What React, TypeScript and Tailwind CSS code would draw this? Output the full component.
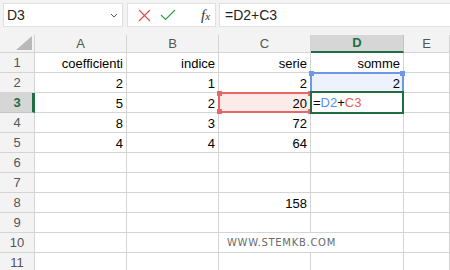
import React from 'react';

type Cell = { v?: string; kind?: 'D2' | 'C3' | 'D3' | 'mark' };

const cols = ['A', 'B', 'C', 'D', 'E'];

const data: Record<number, Cell[]> = {
  1: [{ v: 'coefficienti' }, { v: 'indice' }, { v: 'serie' }, { v: 'somme' }, {}],
  2: [{ v: '2' }, { v: '1' }, { v: '2' }, { v: '2', kind: 'D2' }, {}],
  3: [{ v: '5' }, { v: '2' }, { v: '20', kind: 'C3' }, { kind: 'D3' }, {}],
  4: [{ v: '8' }, { v: '3' }, { v: '72' }, {}, {}],
  5: [{ v: '4' }, { v: '4' }, { v: '64' }, {}, {}],
  8: [{}, {}, { v: '158' }, {}, {}],
  10: [{}, {}, { kind: 'mark' }, {}, {}],
};

const Handle = ({ className }: { className: string }) => (
  <span className={`absolute w-[5px] h-[5px] ${className}`} />
);

const GridCell: React.FC<{ cell: Cell }> = ({ cell }) => {
  if (cell.kind === 'mark') {
    return (
      <div className="relative h-[20px] border-b border-[#d4d4d4]">
        <span className="absolute left-[8px] bottom-[4px] whitespace-nowrap text-[10px] leading-none tracking-[0.7px] text-[#6b6b6b] font-['DejaVu_Sans',sans-serif]">
          WWW.STEMKB.COM
        </span>
      </div>
    );
  }
  if (cell.kind === 'D3') {
    return (
      <div className="relative h-[20px] border-r border-b border-[#d4d4d4]">
        <div className="absolute -left-px -top-[2px] w-[94px] h-[23px] border-2 border-[#1e6e42] bg-white z-20 flex items-center pl-[1px] text-[13px]">
          <span className="text-black">=</span>
          <span className="text-[#5b8ce8]">D2</span>
          <span className="text-black">+</span>
          <span className="text-[#e65c5c]">C3</span>
        </div>
      </div>
    );
  }
  return (
    <div className="relative h-[20px] border-r border-b border-[#d4d4d4] flex items-end justify-end pr-[3px]">
      {cell.kind === 'D2' && (
        <div className="absolute -left-px -top-px w-[94px] h-[21px] border-2 border-[#6f97e8] bg-[#eef2fc] z-10">
          <Handle className="-left-[3px] -top-[3px] bg-[#6f97e8]" />
          <Handle className="-right-[3px] -top-[3px] bg-[#6f97e8]" />
        </div>
      )}
      {cell.kind === 'C3' && (
        <div className="absolute -left-px -top-px w-[93px] h-[21px] border-2 border-r-0 border-[#e86666] bg-[#fdebea] z-10">
          <Handle className="-left-[3px] -top-[3px] bg-[#e86666]" />
          <Handle className="-left-[3px] -bottom-[3px] bg-[#e86666]" />
          <Handle className="-right-[2px] -top-[3px] bg-[#e86666]" />
          <Handle className="-right-[2px] -bottom-[3px] bg-[#e86666]" />
        </div>
      )}
      <span className="relative z-10 text-[13px] leading-[16px] text-black">{cell.v}</span>
    </div>
  );
};

export default function App() {
  const rows = Array.from({ length: 11 }, (_, i) => i + 1);
  return (
    <div className="w-[450px] h-[270px] overflow-hidden bg-white font-['Liberation_Sans',Arial,sans-serif]">
      <div className="h-[35px] bg-[#f3f3f3] flex items-start pt-[3px] pl-[3px]">
        <div className="w-[120px] h-[24px] bg-white border border-[#e0e0e0] flex items-center justify-between pl-[3px] pr-[4px]">
          <span className="text-[14px] text-[#222]">D3</span>
          <svg width="8" height="5" viewBox="0 0 8 5" className="text-[#555]">
            <path d="M1 1l3 3 3-3" fill="none" stroke="currentColor" strokeWidth="1" />
          </svg>
        </div>
        <div className="ml-[4px] w-[89px] h-[24px] bg-white border border-[#e0e0e0] flex items-center pl-[10px] gap-[9px]">
          <svg width="13" height="13" viewBox="0 0 13 13">
            <path d="M1 1l11 11M12 1L1 12" stroke="#e34848" strokeWidth="1.1" />
          </svg>
          <svg width="16" height="12" viewBox="0 0 16 12">
            <path d="M1 6l4.5 4.5L15 1" fill="none" stroke="#2f9e44" strokeWidth="1.2" />
          </svg>
          <span className="ml-[16px] font-['Liberation_Serif',serif] italic text-[15px] text-[#333]">
            f<span className="text-[11px]">x</span>
          </span>
        </div>
        <div className="ml-[3px] flex-1 h-[24px] bg-white border border-[#e0e0e0] border-r-0 flex items-center pl-[5px]">
          <span className="text-[14px] text-[#222]">=D2+C3</span>
        </div>
      </div>
      <div className="grid grid-cols-[35px_92px_92px_92px_93px_1fr]">
        <div className="h-[18px] bg-[#f3f3f3] border-r border-b border-[#d4d4d4] relative">
          <svg width="16" height="14" viewBox="0 0 16 14" className="absolute right-[2px] bottom-[2px]">
            <path d="M16 0V14H0Z" fill="#b9b9b9" />
          </svg>
        </div>
        {cols.map(c =>
          c === 'D' ? (
            <div key={c} className="h-[18px] bg-[#d6d6d6] border-r border-[#c4c4c4] border-b-2 border-b-[#1e6e42] flex items-center justify-center text-[13px] font-bold text-[#1e6e42]">
              {c}
            </div>
          ) : (
            <div key={c} className="h-[18px] bg-[#f3f3f3] border-r border-b border-[#d4d4d4] flex items-center justify-center text-[13px] text-[#555]">
              {c}
            </div>
          )
        )}
        {rows.map(r => (
          <React.Fragment key={r}>
            {r === 3 ? (
              <div className="h-[20px] bg-[#d6d6d6] border-r-[3px] border-r-[#1e6e42] border-b border-b-[#c4c4c4] flex items-center justify-center pl-[2px] text-[13px] font-bold text-[#1e6e42]">
                {r}
              </div>
            ) : (
              <div className="h-[20px] bg-[#f3f3f3] border-r border-b border-[#d4d4d4] flex items-center justify-center text-[13px] text-[#555]">
                {r}
              </div>
            )}
            {(data[r] ?? [{}, {}, {}, {}, {}]).map((cell, i) => (
              <GridCell key={i} cell={cell} />
            ))}
          </React.Fragment>
        ))}
      </div>
    </div>
  );
}
